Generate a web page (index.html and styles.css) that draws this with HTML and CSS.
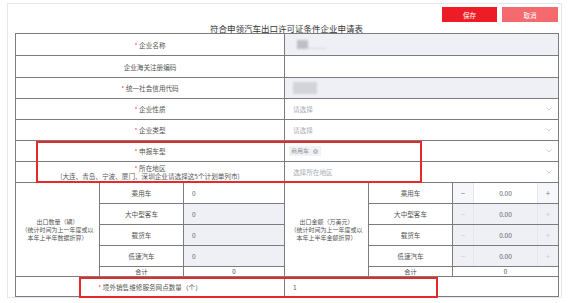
FILE: index.html
```html
<!DOCTYPE html>
<html lang="zh-CN">
<head>
<meta charset="utf-8">
<title>符合申领汽车出口许可证条件企业申请表</title>
<link rel="stylesheet" href="styles.css">
</head>
<body>
<div class="panel">
  <div class="toolbar">
    <button class="btn btn-save">保存</button>
    <button class="btn btn-cancel">取消</button>
  </div>
  <div class="title">符合申领汽车出口许可证条件企业申请表</div>
  <table class="form">
    <colgroup>
      <col class="c1"><col class="c2"><col class="c3"><col class="c4"><col class="c5"><col class="c6">
    </colgroup>
    <tr class="h22">
      <td colspan="3" class="lbl"><span class="req">*</span> 企业名称</td>
      <td colspan="3" class="val ro"><span class="blur blur-a"></span><span class="blur blur-a2"></span></td>
    </tr>
    <tr class="h22">
      <td colspan="3" class="lbl">企业海关注册编码</td>
      <td colspan="3" class="val"></td>
    </tr>
    <tr class="h21">
      <td colspan="3" class="lbl"><span class="req">*</span> 统一社会信用代码</td>
      <td colspan="3" class="val ro"><span class="blur blur-b"></span></td>
    </tr>
    <tr class="h21">
      <td colspan="3" class="lbl"><span class="req">*</span> 企业性质</td>
      <td colspan="3" class="val"><div class="sel"><span class="ph">请选择</span><svg class="chev" width="6" height="4" viewBox="0 0 6 4"><polyline points="0.5,0.5 3,3 5.5,0.5" fill="none" stroke="#c0c4cc" stroke-width="0.8"/></svg></div></td>
    </tr>
    <tr class="h21">
      <td colspan="3" class="lbl"><span class="req">*</span> 企业类型</td>
      <td colspan="3" class="val"><div class="sel"><span class="ph">请选择</span><svg class="chev" width="6" height="4" viewBox="0 0 6 4"><polyline points="0.5,0.5 3,3 5.5,0.5" fill="none" stroke="#c0c4cc" stroke-width="0.8"/></svg></div></td>
    </tr>
    <tr class="h21">
      <td colspan="3" class="lbl"><span class="req">*</span> 申报车型</td>
      <td colspan="3" class="val"><div class="sel"><span class="tag">商用车<svg class="tag-x" width="5" height="5" viewBox="0 0 10 10"><circle cx="5" cy="5" r="5" fill="#b9bcc2"/><path d="M3.2 3.2 L6.8 6.8 M6.8 3.2 L3.2 6.8" stroke="#fff" stroke-width="1.2"/></svg></span><svg class="chev" width="6" height="4" viewBox="0 0 6 4"><polyline points="0.5,0.5 3,3 5.5,0.5" fill="none" stroke="#c0c4cc" stroke-width="0.8"/></svg></div></td>
    </tr>
    <tr class="h21">
      <td colspan="3" class="lbl two"><span class="req">*</span> 所在地区<br>(大连、青岛、宁波、厦门、深圳企业请选择这5个计划单列市)</td>
      <td colspan="3" class="val"><div class="sel"><span class="ph">选择所在地区</span><svg class="chev" width="6" height="4" viewBox="0 0 6 4"><polyline points="0.5,0.5 3,3 5.5,0.5" fill="none" stroke="#c0c4cc" stroke-width="0.8"/></svg></div></td>
    </tr>
    <tr class="h21">
      <td rowspan="5" class="group">出口数量（辆）<br>（统计时间为上一年度或以<br>本年上半年数据折算）</td>
      <td class="type">乘用车</td>
      <td class="val numl">0</td>
      <td rowspan="5" class="group">出口金额（万美元）<br>（统计时间为上一年度或以<br>本年上半年金额折算）</td>
      <td class="type">乘用车</td>
      <td class="val"><div class="num"><span class="step">−</span><span class="nv">0.00</span><span class="step">+</span></div></td>
    </tr>
    <tr class="h21">
      <td class="type">大中型客车</td>
      <td class="val numl dis">0</td>
      <td class="type">大中型客车</td>
      <td class="val"><div class="num dis"><span class="step">−</span><span class="nv">0.00</span><span class="step">+</span></div></td>
    </tr>
    <tr class="h21">
      <td class="type">载货车</td>
      <td class="val numl dis">0</td>
      <td class="type">载货车</td>
      <td class="val"><div class="num dis"><span class="step">−</span><span class="nv">0.00</span><span class="step">+</span></div></td>
    </tr>
    <tr class="h21">
      <td class="type">低速汽车</td>
      <td class="val numl dis">0</td>
      <td class="type">低速汽车</td>
      <td class="val"><div class="num dis"><span class="step">−</span><span class="nv">0.00</span><span class="step">+</span></div></td>
    </tr>
    <tr class="h10">
      <td class="sum">合计</td>
      <td class="sum">0</td>
      <td class="sum">合计</td>
      <td class="sum">0</td>
    </tr>
    <tr class="h20">
      <td colspan="3" class="lbl"><span class="req">*</span> 境外销售维修服务网点数量（个）</td>
      <td colspan="3" class="val last">1</td>
    </tr>
  </table>
  <div class="mark mark-1"></div>
  <div class="mark mark-2"></div>
</div>
</body>
</html>
```

FILE: styles.css
```css
html, body {
  margin: 0;
  padding: 0;
  background: #fff;
}
body {
  font-family: "Noto Sans CJK SC", "Noto Sans", sans-serif;
  color: #555;
}
.panel {
  position: relative;
  box-sizing: border-box;
  margin: 3px 0 0 7px;
  width: 555px;
  height: 295px;
  border: 1px solid #e4e7ed;
  padding: 3px 3px 0 7px;
}
.toolbar {
  display: flex;
  justify-content: flex-end;
  gap: 5px;
  height: 15px;
}
.btn {
  border: none;
  margin: 0;
  padding: 0;
  height: 15px;
  font-family: inherit;
  font-size: 6.6px;
  color: #fff;
  cursor: pointer;
}
.btn-save { width: 55px; background: #ee1d25; }
.btn-cancel { width: 56px; background: #f56a6f; }
.title {
  margin-top: 2px;
  height: 9px;
  line-height: 9px;
  font-size: 8.5px;
  text-align: center;
  color: #333;
}
.form {
  width: 543px;
  border-collapse: collapse;
  table-layout: fixed;
  font-size: 6.6px;
}
.c1 { width: 84px; }
.c2 { width: 84px; }
.c3 { width: 101px; }
.c4 { width: 84px; }
.c5 { width: 84px; }
.c6 { width: 106px; }
.form td {
  border: 1px solid #7c7c7c;
  padding: 0;
  line-height: 8px;
  vertical-align: middle;
}
.h22 { height: 22px; }
.h21 { height: 21px; }
.h20 { height: 20px; }
.h10 { height: 10px; }
.lbl {
  text-align: center;
  color: #555;
}
.lbl.two { line-height: 8.5px; }
.req { color: #f04848; }
.val {
  padding-left: 8px !important;
  color: #606266;
  background: #fff;
}
.val.ro { background: #eef0f5; }
.blur {
  display: inline-block;
  vertical-align: middle;
  filter: blur(1.2px);
}
.blur-a { width: 11px; height: 9px; background: #bfc0c5; margin-left: 4px; }
.blur-a2 { width: 18px; height: 1px; background: #d4d6db; margin-top: 8px; }
.blur-b { width: 24px; height: 12px; background: #d2d4da; margin-left: 0; }
.sel {
  display: flex;
  align-items: center;
  justify-content: space-between;
  padding-right: 6px;
}
.ph { color: #a8abb2; }
.chev { display: block; }
.tag {
  display: inline-flex;
  align-items: center;
  gap: 4px;
  background: #f0f2f5;
  color: #909399;
  height: 10px;
  padding: 0 3px 0 2px;
  margin-left: -4px;
  font-size: 6px;
}
.tag-x { display: block; }
.group {
  text-align: center;
  font-size: 6px;
  line-height: 6px;
  color: #555;
}
.type {
  text-align: center;
  color: #555;
}
.numl { background: #fff; }
.numl.dis { background: #eef0f5; }
.form td.val:has(.num) { padding-left: 0 !important; }
.num {
  display: flex;
  height: 20px;
  align-items: stretch;
  background: #fff;
}
.step {
  width: 20px;
  display: flex;
  align-items: center;
  justify-content: center;
  background: #f5f7fa;
  color: #7a7d84;
  font-size: 8px;
}
.step:first-child { border-right: 1px solid #e4e7ed; }
.step:last-child { border-left: 1px solid #e4e7ed; }
.nv {
  flex: 1;
  display: flex;
  align-items: center;
  justify-content: center;
  color: #606266;
}
.num.dis { background: #eef0f5; }
.num.dis .step { background: #eef0f5; color: #c9ccd2; }
.sum {
  text-align: center;
  color: #444;
  line-height: 8px;
  font-size: 6.2px;
}
.val.last { color: #606266; }
.mark {
  position: absolute;
  box-sizing: border-box;
  border: 2px solid #e8282b;
}
.mark-1 { left: 28px; top: 137px; width: 386px; height: 42px; }
.mark-2 { left: 71px; top: 273px; width: 359px; height: 21px; }
```
